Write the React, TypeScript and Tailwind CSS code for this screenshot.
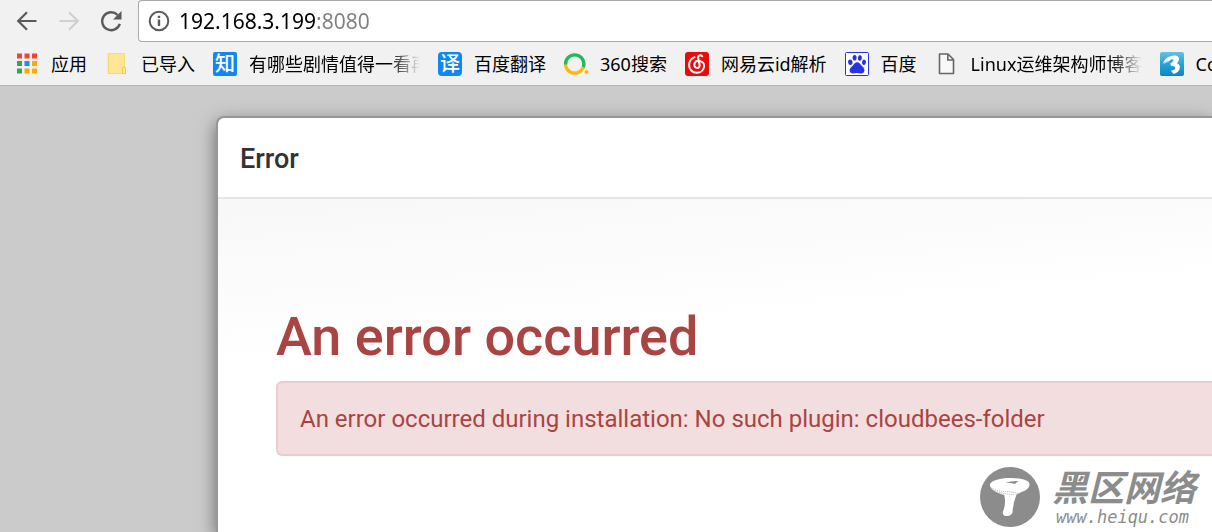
import type { ReactNode } from "react";

function AppsIcon() {
  const colors = ["#f44336", "#f44336", "#f44336", "#34a45a", "#1e88ff", "#f9ab00", "#34a45a", "#f9ab00", "#f9ab00"];
  return (
    <svg viewBox="0 0 24 24" className="size-6" aria-hidden="true">
      {colors.map((c, i) => (
        <rect key={i} x={2 + (i % 3) * 7.5} y={1.500 + Math.floor(i / 3) * 7.5} width="5" height="5" fill={c} />
      ))}
    </svg>
  );
}

function FolderIcon() {
  return (
    <svg viewBox="0 0 24 24" className="size-6" aria-hidden="true">
      <path d="M3.5 1.500h16v20h-16z" fill="#ffe694" stroke="#f7d978" />
      <path d="M3.5 1.500v20" stroke="#fbd968" strokeWidth="1.5" />
      <path d="M17.5 21.500v-5q0-1.500 1.500-1.500t1.500 1.500v5z" fill="#ffe694" stroke="#f3c63f" />
    </svg>
  );
}

function SearchRingIcon() {
  return (
    <svg viewBox="0 0 24 24" className="size-6 overflow-visible" aria-hidden="true">
      <path d="M1.500 12a9.200 9.200 0 0 1 18.400 0" fill="none" stroke="#1fba5e" strokeWidth="3.200" />
      <path d="M19.900 12a9.200 9.200 0 0 1-18.400 0" fill="none" stroke="#fdb813" strokeWidth="3.200" />
      <path d="M1.500 12.500q.1-1.800.7-3M19.900 11.500q0 2-.7 3.500" fill="none" stroke="#1fba5e" strokeWidth="3.200" />
      <circle cx="22.500" cy="20" r="2" fill="#fdb813" />
    </svg>
  );
}

function MusicIcon() {
  return (
    <svg viewBox="0 0 24 24" className="size-6" aria-hidden="true">
      <rect width="24" height="24" rx="3" fill="#ec0a0a" />
      <path
        d="M17.200 4.300c-1.500-1.500-4.300-1.200-4.100 1.200l1.500 7.300c.3 1.900-.8 3.100-2.400 3.100-1.900 0-3.100-1.500-2.800-3.400.4-2.600 2.700-3.800 5-3.600 3 .3 4.900 2.500 4.700 5.200-.3 4-3.300 6.700-7.300 6.700-4.600 0-7.700-3.400-7.700-7.700 0-3.700 2-6.500 5.400-7.900"
        fill="none"
        stroke="#fff"
        strokeWidth="2"
        strokeLinecap="round"
      />
    </svg>
  );
}

function PawIcon() {
  return (
    <svg viewBox="0 0 24 24" className="size-6" aria-hidden="true">
      <rect x=".5" y=".5" width="23" height="23" rx="1" fill="#fff" stroke="#2932e1" />
      <g fill="#2932e1">
        <ellipse cx="5.300" cy="10.300" rx="2.200" ry="2.700" transform="rotate(-12 5.300 10.300)" />
        <ellipse cx="9.600" cy="5.700" rx="2" ry="2.800" />
        <ellipse cx="14.900" cy="5.900" rx="2" ry="2.800" transform="rotate(8 14.900 5.900)" />
        <ellipse cx="19" cy="10.300" rx="2" ry="2.700" transform="rotate(12 19 10.300)" />
        <path d="M12.200 10.300c2 0 2.800 1.700 4.300 3.300 1.300 1.400 3 2.500 3 4.600 0 2-1.500 3.300-3.500 3.300-1.500 0-2.500-.4-3.900-.4s-2.300.4-3.900.4c-2.100 0-3.600-1.300-3.600-3.300 0-2.200 1.900-3.200 3.300-4.800 1.300-1.500 2.300-3.100 4.300-3.100z" />
      </g>
    </svg>
  );
}

function PageIcon() {
  return (
    <svg viewBox="0 0 24 24" className="size-6" aria-hidden="true">
      <path d="M4.500 2h8.500l5.500 5.500v14h-14z" fill="#f8f8f8" stroke="#666" strokeWidth="1.600" strokeLinejoin="round" />
      <path d="M12.800 2v6h5.700" fill="none" stroke="#666" strokeWidth="1.600" />
    </svg>
  );
}

function ThreeIcon() {
  return (
    <svg viewBox="0 0 24 24" className="size-6" aria-hidden="true">
      <defs>
        <linearGradient id="aqua" x1="0" y1="0" x2="0" y2="1">
          <stop offset="0" stopColor="#67bfe4" />
          <stop offset=".5" stopColor="#27a3d6" />
          <stop offset="1" stopColor="#0788c6" />
        </linearGradient>
      </defs>
      <rect width="24" height="24" rx="2" fill="url(#aqua)" />
      <path d="M3 11.500Q4.500 6.500 9.500 4.500 18 1.500 19 6.500q.2 2.500-2 4.800 3.200 1 2.800 4.700-.6 4.500-6.300 6l-2.500-3.300q4.300-.8 4.300-2.700 0-1.800-4.300-2.200l-.8-2.300Q14 9.500 13.500 7.500 11.500 6.300 8.500 9.500L7.500 8.500z" fill="#fff" />
      <path d="M3 12.500 7.500 8l1.200 1.300z" fill="#fff" opacity=".7" />
    </svg>
  );
}

function GlyphTile({ glyph, rounded }: { glyph: string; rounded?: boolean }) {
  return (
    <span
      aria-hidden="true"
      className={`flex size-6 items-center justify-center bg-[#1287f0] text-xl leading-6 font-medium text-white ${rounded ? "rounded" : "rounded-xs"}`}
    >
      {glyph}
    </span>
  );
}

const bookmarks: { label: string; icon: ReactNode; fade?: boolean }[] = [
  { label: "应用", icon: <AppsIcon /> },
  { label: "已导入", icon: <FolderIcon /> },
  { label: "有哪些剧情值得一看再", icon: <GlyphTile glyph="知" />, fade: true },
  { label: "百度翻译", icon: <GlyphTile glyph="译" rounded /> },
  { label: "360搜索", icon: <SearchRingIcon /> },
  { label: "网易云id解析", icon: <MusicIcon /> },
  { label: "百度", icon: <PawIcon /> },
  { label: "Linux运维架构师博客", icon: <PageIcon />, fade: true },
  { label: "Co", icon: <ThreeIcon /> },
];

function Toolbar() {
  return (
    <div className="flex h-[42px] items-center">
      <div className="flex shrink-0 items-center gap-[18px] pr-[15px] pl-[15px] text-[#5a5a5a]">
        <button type="button" aria-label="Back" className="size-6">
          <svg viewBox="0 0 24 24" fill="none" stroke="currentColor" strokeWidth="2.200">
            <path d="M21.500 12H4M12 3.200 3.200 12l8.800 8.800" />
          </svg>
        </button>
        <button type="button" aria-label="Forward" disabled className="size-6 text-[#d0d0d0]">
          <svg viewBox="0 0 24 24" fill="none" stroke="currentColor" strokeWidth="2.200">
            <path d="M2.500 12H20M12 3.200 20.800 12 12 20.800" />
          </svg>
        </button>
        <button type="button" aria-label="Reload" className="size-6">
          <svg viewBox="0 0 24 24" fill="none" stroke="currentColor" strokeWidth="2.400">
            <path d="M20.800 14.800A9 9 0 1 1 18.500 5.800" />
            <path d="M22.500 2v8.500H14z" fill="currentColor" stroke="none" />
          </svg>
        </button>
      </div>
      <div className="flex h-[42px] min-w-0 flex-1 items-center gap-2 rounded-l border border-r-0 border-[#a9a9a9] bg-white pl-2">
        <svg viewBox="0 0 24 24" className="size-6 shrink-0 text-[#5a5a5a]" aria-hidden="true">
          <circle cx="12" cy="12" r="9.300" fill="none" stroke="currentColor" strokeWidth="2" />
          <path d="M12 10.500v6.500M12 6.800v2.200" stroke="currentColor" strokeWidth="2.400" />
        </svg>
        <input
          type="text"
          aria-label="Address"
          defaultValue="192.168.3.199:8080"
          className="w-full min-w-0 bg-[linear-gradient(to_right,#000_137px,#808080_137px)] bg-clip-text text-[21px] leading-8 text-transparent outline-none"
        />
      </div>
    </div>
  );
}

function BookmarkBar() {
  return (
    <nav aria-label="Bookmarks" className="flex h-[43px] items-center gap-[18px] overflow-hidden pl-[15px]">
      {bookmarks.map(({ label, icon, fade }) => (
        <a key={label} href="#" className="flex shrink-0 items-center gap-3 text-lg leading-6 font-normal whitespace-nowrap text-black">
          {icon}
          <span
            className={fade ? "w-[171px] overflow-hidden [mask-image:linear-gradient(to_right,#000_82%,transparent)]" : ""}
          >
            {label}
          </span>
        </a>
      ))}
    </nav>
  );
}

function Watermark() {
  return (
    <div className="absolute right-4 bottom-[5px] flex items-center gap-3 text-[#8c8c8c]">
      <svg viewBox="0 0 60 60" className="size-[60px]" aria-hidden="true">
        <circle cx="30" cy="30" r="30" fill="#8c8c8c" />
        <path d="M24 27q2.500 9-1 17.500-1 4 3 4.500 5 .3 6.500-3.500Q33 36 37 26z" fill="#fff" />
        <path d="M10 17c2-4 12-6.500 22-6 11 .3 18 2.500 17.500 6.500-.3 5.500-6 6.500-10 8.500-4 2.500-8 3-14 2C17 27 9 22 10 17z" fill="#fff" />
        <path d="M11.500 21q7 4 16 3.500Q32 25 38 26.500M14 23.500q7 3.500 20 4" fill="none" stroke="#aaa" strokeDasharray="1 1" />
        <path d="M25.500 15.500q7-2 13.500-1.500-3 1-4 3-4-1.500-9.500-1.500z" fill="#8c8c8c" />
      </svg>
      <div className="italic">
        <p className="mb-1 font-['Noto_Sans_CJK_SC',sans-serif] text-4xl leading-9 font-bold">黑区网络</p>
        <p className="pl-1 font-['DejaVu_Sans_Mono',monospace] text-[17px] leading-5">www.heiqu.com</p>
      </div>
    </div>
  );
}

export default function App() {
  return (
    <div className="relative flex min-h-screen flex-col overflow-hidden bg-[#cbcbcb]">
      <header className="border-b border-[#b4b4b4] bg-[#f1f1f1] font-['Noto_Sans','Noto_Sans_CJK_SC',sans-serif]">
        <Toolbar />
        <BookmarkBar />
      </header>
      <main className="flex flex-1 pt-[30px] pl-[216px] font-['Roboto',sans-serif]">
        <section className="flex flex-1 flex-col rounded-tl-lg border-t-2 border-l-2 border-[#979797] bg-white shadow-[0_6px_18px_rgba(0,0,0,0.5)]">
          <h2 className="border-b-2 border-[#e5e5e5] pt-[23px] pb-5 pl-[22px] text-[27px] leading-9 font-medium text-[#333]">Error</h2>
          <div className="flex-1 bg-[linear-gradient(175deg,#f8f8f8_15px,#fff_165px)] pt-[108px] pl-[58px] text-[#a94442]">
            <h1 className="text-[54px] leading-[60px] font-medium">An error occurred</h1>
            <p className="mt-[14px] rounded-l-md border-2 border-r-0 border-[#ebccd1] bg-[#f2dede] pt-5 pb-[18px] pl-[22px] text-2xl leading-[33px]">
              An error occurred during installation: No such plugin: cloudbees-folder
            </p>
          </div>
        </section>
      </main>
      <Watermark />
    </div>
  );
}
